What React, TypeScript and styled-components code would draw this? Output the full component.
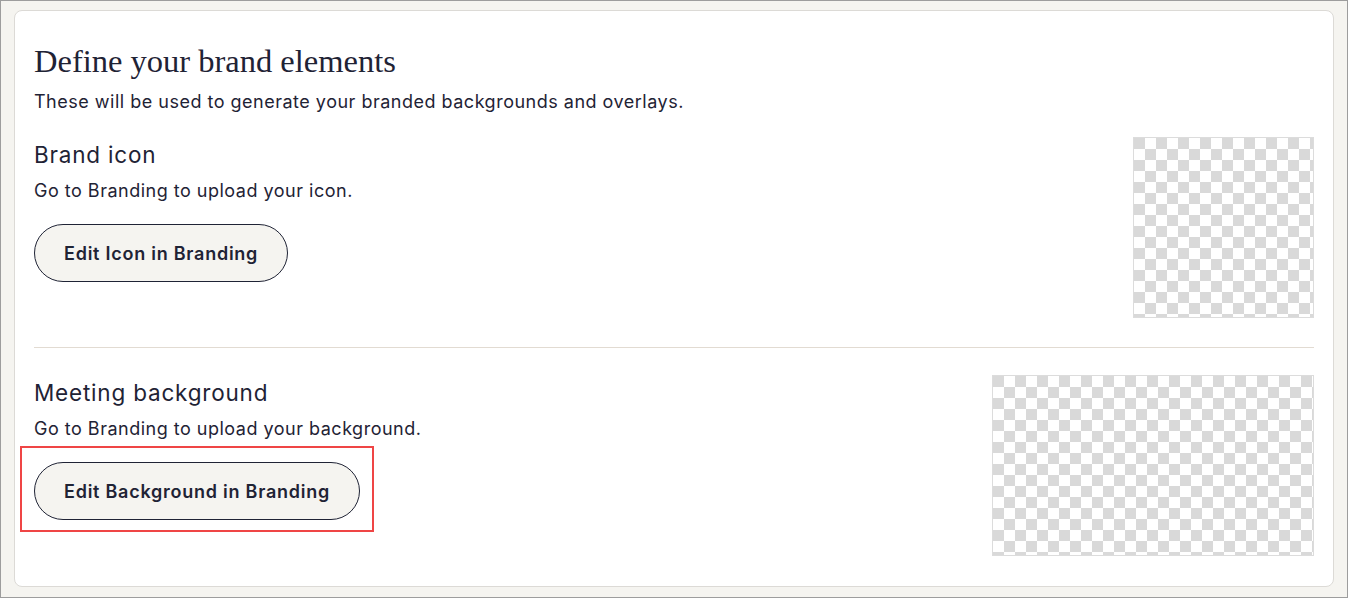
import React from 'react';
import styled, { createGlobalStyle } from 'styled-components';

const GlobalStyle = createGlobalStyle`
  html, body {
    margin: 0;
    padding: 0;
    background: #f5f4f0;
  }
  body {
    font-family: Inter, "Noto Sans", sans-serif;
    color: #1f2335;
  }
  * { box-sizing: border-box; }
`;

const Frame = styled.div`
  width: 1348px;
  height: 598px;
  border: 1px solid #9d9d9d;
  background: #f5f4f0;
  padding: 9px 13px 0 13px;
`;

const Card = styled.section`
  background: #fff;
  border: 1px solid #dcdad6;
  border-radius: 8px;
  height: 577px;
  padding: 29px 19px 30px 19px;
`;

const Heading = styled.h1`
  margin: 0 0 8px;
  font-family: "Liberation Serif", serif;
  font-weight: 400;
  font-size: 32.5px;
  line-height: 42px;
  color: #1f2335;
`;

const Intro = styled.p`
  margin: 0 0 23px;
  font-size: 18px;
  letter-spacing: 0.5px;
  line-height: 24px;
  color: #1f2335;
`;

const Row = styled.div`
  display: flex;
  justify-content: space-between;
  align-items: flex-start;
`;

const TextColumn = styled.div`
  display: flex;
  flex-direction: column;
  align-items: flex-start;
`;

const SectionTitle = styled.h2`
  margin: 0 0 6px;
  font-size: 22.5px;
  letter-spacing: 0.8px;
  font-weight: 400;
  line-height: 36px;
  color: #1f2335;
`;

const Description = styled.p`
  margin: 0 0 21px;
  font-size: 18px;
  letter-spacing: 0.5px;
  line-height: 24px;
  color: #1f2335;
`;

const Highlight = styled.div<{ $active?: boolean }>`
  margin: -16px 0 0 -14px;
  padding: 14px 12px 10px;
  border: 2px solid ${({ $active }) => ($active ? '#ef4545' : 'transparent')};
`;

const PillButton = styled.button`
  height: 58px;
  padding: 0 29px;
  border: 1px solid #1f2335;
  border-radius: 999px;
  background: #f5f4f0;
  font-family: Inter, "Noto Sans", sans-serif;
  font-size: 18px;
  letter-spacing: 0.75px;
  font-weight: 600;
  color: #1f2335;
  cursor: pointer;
`;

const Divider = styled.hr`
  margin: 29px 0 27px;
  border: none;
  border-top: 1px solid #e2dbd2;
`;

const Checker = styled.div<{ $w: number }>`
  width: ${({ $w }) => $w}px;
  height: 181px;
  flex-shrink: 0;
  border: 1px solid #dcdcdc;
  background-color: #fff;
  background-image:
    linear-gradient(45deg, #d9d9d9 25%, transparent 25%, transparent 75%, #d9d9d9 75%),
    linear-gradient(45deg, #d9d9d9 25%, transparent 25%, transparent 75%, #d9d9d9 75%);
  background-size: 22px 22px;
  background-position: 11px 0, 0 11px;
`;

const App: React.FC = () => {
  return (
    <>
      <GlobalStyle />
      <Frame>
        <Card>
          <Heading>Define your brand elements</Heading>
          <Intro>These will be used to generate your branded backgrounds and overlays.</Intro>

          <Row>
            <TextColumn>
              <SectionTitle>Brand icon</SectionTitle>
              <Description>Go to Branding to upload your icon.</Description>
              <Highlight>
                <PillButton>Edit Icon in Branding</PillButton>
              </Highlight>
            </TextColumn>
            <Checker $w={181} />
          </Row>

          <Divider />

          <Row>
            <TextColumn>
              <SectionTitle>Meeting background</SectionTitle>
              <Description>Go to Branding to upload your background.</Description>
              <Highlight $active>
                <PillButton>Edit Background in Branding</PillButton>
              </Highlight>
            </TextColumn>
            <Checker $w={322} />
          </Row>
        </Card>
      </Frame>
    </>
  );
};

export default App;
